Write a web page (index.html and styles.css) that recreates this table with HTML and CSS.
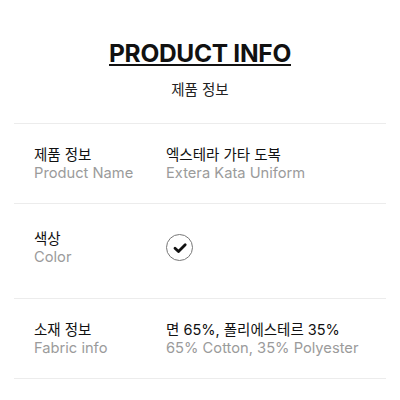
FILE: index.html
```html
<!DOCTYPE html>
<html lang="ko">
<head>
  <meta charset="UTF-8">
  <meta name="viewport" content="width=device-width, initial-scale=1.0">
  <title>Product Info</title>
  <link rel="stylesheet" href="styles.css">
</head>
<body>

  <!-- Title -->
  <header class="info-header">
    <h1>PRODUCT INFO</h1>
    <p>제품 정보</p>
  </header>

  <!-- Info table -->
  <section class="info-list">
    <div class="info-row">
      <div class="info-label">
        <span class="ko">제품 정보</span>
        <span class="en">Product Name</span>
      </div>
      <div class="info-value">
        <span class="ko">엑스테라 가타 도복</span>
        <span class="en">Extera Kata Uniform</span>
      </div>
    </div>

    <div class="info-row color-row">
      <div class="info-label">
        <span class="ko">색상</span>
        <span class="en">Color</span>
      </div>
      <div class="info-value">
        <span class="swatch">
          <svg width="16" height="16" viewBox="0 0 16 16">
            <path d="M3 8.2 L6.5 11.6 L13.2 4.8" fill="none" stroke="#111" stroke-width="2.8" stroke-linecap="round" stroke-linejoin="round"/>
          </svg>
        </span>
      </div>
    </div>

    <div class="info-row">
      <div class="info-label">
        <span class="ko">소재 정보</span>
        <span class="en">Fabric info</span>
      </div>
      <div class="info-value">
        <span class="ko">면 65%, 폴리에스테르 35%</span>
        <span class="en">65% Cotton, 35% Polyester</span>
      </div>
    </div>
  </section>

</body>
</html>
```

FILE: styles.css
```css
* {
  box-sizing: border-box;
  margin: 0;
  padding: 0;
}

body {
  font-family: Inter, "Noto Sans CJK KR", sans-serif;
  background-color: #fff;
  color: #111;
  padding: 0 14px;
}

/* Header */
.info-header {
  text-align: center;
  padding-top: 38px;
}

.info-header h1 {
  font-size: 24.5px;
  font-weight: 700;
  line-height: 30px;
  text-decoration: underline;
  text-decoration-thickness: 2px;
  text-underline-offset: 2px;
  letter-spacing: -0.3px;
}

.info-header p {
  font-size: 14.5px;
  line-height: 20px;
  margin-top: 12px;
  color: #222;
}

/* Rows */
.info-list {
  margin-top: 23px;
  border-top: 1px solid #ececec;
}

.info-row {
  display: flex;
  align-items: center;
  height: 80px;
  padding-left: 20px;
  border-bottom: 1px solid #ececec;
}

.color-row {
  height: 95px;
  padding-bottom: 7px;
}

.info-label {
  width: 132px;
  display: flex;
  flex-direction: column;
}

.info-value {
  display: flex;
  flex-direction: column;
}

.ko {
  font-size: 14.5px;
  line-height: 19px;
  color: #111;
}

.en {
  font-size: 14.7px;
  line-height: 19px;
  color: #9b9b9b;
}

.swatch {
  width: 27px;
  height: 27px;
  border: 1px solid #777;
  border-radius: 50%;
  display: flex;
  align-items: center;
  justify-content: center;
}
```
